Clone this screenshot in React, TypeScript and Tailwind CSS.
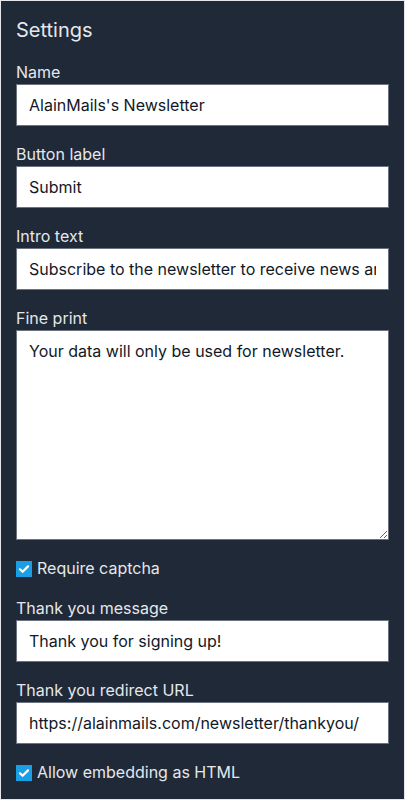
import { useState } from "react";

const font = { fontFamily: "Inter, 'Noto Sans', sans-serif" };

function Field({ label, value }: { label: string; value: string }) {
  const [v, setV] = useState(value);
  return (
    <div className="mb-4">
      <label className="block text-base leading-6 text-[#e5e7eb]">{label}</label>
      <input
        type="text"
        value={v}
        onChange={(e) => setV(e.target.value)}
        className="block w-full h-[42px] px-3 py-2 bg-white text-[#111827] text-base leading-6 border border-[#6b7280] outline-none"
      />
    </div>
  );
}

function Check({ label }: { label: string }) {
  const [on, setOn] = useState(true);
  return (
    <label className="mb-4 flex items-center h-6 gap-[5px] text-base text-[#e5e7eb]">
      <span className="relative top-[1px] w-4 h-4 shrink-0">
        <input
          type="checkbox"
          checked={on}
          onChange={() => setOn(!on)}
          className="appearance-none block w-4 h-4 bg-white checked:bg-[#1a9fe6] border border-[#6b7280] checked:border-[#1a9fe6]"
        />
        {on && (
          <svg className="absolute inset-0 pointer-events-none" width="16" height="16" viewBox="0 0 16 16">
            <path d="M4 8.3l2.6 2.5L12 5.4" fill="none" stroke="white" strokeWidth="2.2" strokeLinecap="round" strokeLinejoin="round" />
          </svg>
        )}
      </span>
      {label}
    </label>
  );
}

export default function App() {
  const [fine, setFine] = useState("Your data will only be used for newsletter.");
  return (
    <div style={font} className="w-[405px] h-[800px] bg-[#1f2937] border border-[#e5e7eb] px-[15px] pt-[15px] overflow-hidden">
      <h2 className="text-xl leading-7 text-[#e5e7eb] mb-4">Settings</h2>
      <Field label="Name" value="AlainMails's Newsletter" />
      <Field label="Button label" value="Submit" />
      <Field label="Intro text" value="Subscribe to the newsletter to receive news and updates." />
      <div className="mb-4">
        <label className="block text-base leading-6 text-[#e5e7eb]">Fine print</label>
        <textarea
          rows={8}
          value={fine}
          onChange={(e) => setFine(e.target.value)}
          className="block w-full h-[210px] px-3 py-2 bg-white text-[#111827] text-base leading-6 border border-[#6b7280] outline-none"
        />
      </div>
      <Check label="Require captcha" />
      <Field label="Thank you message" value="Thank you for signing up!" />
      <Field label="Thank you redirect URL" value="https://alainmails.com/newsletter/thankyou/" />
      <Check label="Allow embedding as HTML" />
    </div>
  );
}
